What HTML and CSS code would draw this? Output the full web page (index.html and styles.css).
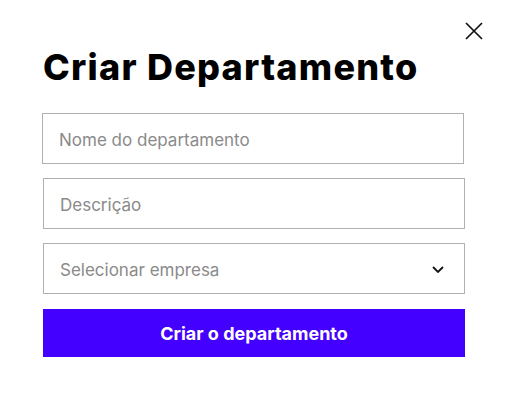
FILE: index.html
```html
<!DOCTYPE html>
<html lang="pt">
<head>
<meta charset="utf-8">
<title>Criar Departamento</title>
<link rel="stylesheet" href="styles.css">
</head>
<body>
<div class="modal">
  <button class="close" aria-label="Fechar">
    <svg width="18" height="18" viewBox="0 0 18 18"><path d="M1 1L17 17M17 1L1 17" stroke="#111" stroke-width="1.7" fill="none"/></svg>
  </button>
  <h1 class="title">Criar Departamento</h1>
  <form class="form">
    <input class="field field-first" type="text" placeholder="Nome do departamento">
    <input class="field" type="text" placeholder="Descrição">
    <div class="field select">
      <span class="select-text">Selecionar empresa</span>
      <svg class="chevron" width="12" height="7" viewBox="0 0 12 7"><path d="M1 1L6 6L11 1" stroke="#111" stroke-width="1.8" fill="none"/></svg>
    </div>
    <button class="submit" type="button">Criar o departamento</button>
  </form>
</div>
</body>
</html>
```

FILE: styles.css
```css
* { box-sizing: border-box; }
html, body { margin: 0; padding: 0; background: #fff; }
body { font-family: Inter, "Noto Sans", sans-serif; }
.modal {
  position: relative;
  width: 506px;
  height: 402px;
  padding: 40px 41px 0 43px;
}
.close {
  position: absolute;
  top: 22px;
  left: 465px;
  width: 18px;
  height: 18px;
  padding: 0;
  border: 0;
  background: none;
  display: block;
}
.close svg { display: block; }
.title {
  margin: 0 0 18px 0;
  font-family: Inter, sans-serif;
  font-weight: 800;
  font-size: 36px;
  line-height: 55px;
  letter-spacing: 1.25px;
  color: #000;
}
.form {
  display: flex;
  flex-direction: column;
  gap: 14px;
}
.field {
  width: 422px;
  height: 51px;
  border: 1px solid #b0b0b0;
  border-radius: 0;
  padding: 2px 16px 0;
  font-family: Inter, sans-serif;
  font-size: 17px;
  color: #333;
  background: #fff;
  outline: none;
  margin: 0;
}
.field-first { margin-left: -1px; }
.field::placeholder { color: #8a8a8a; }
.select {
  display: flex;
  align-items: center;
  justify-content: space-between;
  padding-right: 20px;
}
.select-text { color: #8a8a8a; }
.chevron { display: block; }
.submit {
  margin-top: 1px;
  width: 422px;
  height: 48px;
  border: 0;
  background: #4400ff;
  color: #fff;
  font-family: Inter, sans-serif;
  font-weight: 700;
  font-size: 18px;
}
```
